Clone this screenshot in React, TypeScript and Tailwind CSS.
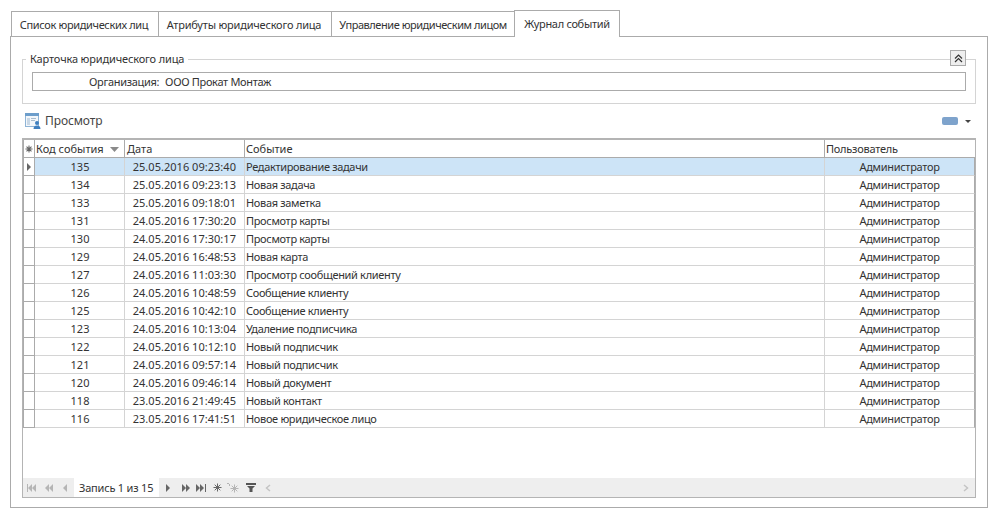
import React from 'react';

const rows = [
  ['135', '25.05.2016 09:23:40', 'Редактирование задачи'],
  ['134', '25.05.2016 09:23:13', 'Новая задача'],
  ['133', '25.05.2016 09:18:01', 'Новая заметка'],
  ['131', '24.05.2016 17:30:20', 'Просмотр карты'],
  ['130', '24.05.2016 17:30:17', 'Просмотр карты'],
  ['129', '24.05.2016 16:48:53', 'Новая карта'],
  ['127', '24.05.2016 11:03:30', 'Просмотр сообщений клиенту'],
  ['126', '24.05.2016 10:48:59', 'Сообщение клиенту'],
  ['125', '24.05.2016 10:42:10', 'Сообщение клиенту'],
  ['123', '24.05.2016 10:13:04', 'Удаление подписчика'],
  ['122', '24.05.2016 10:12:10', 'Новый подписчик'],
  ['121', '24.05.2016 09:57:14', 'Новый подписчик'],
  ['120', '24.05.2016 09:46:14', 'Новый документ'],
  ['118', '23.05.2016 21:49:45', 'Новый контакт'],
  ['116', '23.05.2016 17:41:51', 'Новое юридическое лицо'],
];

const tabs = [
  { label: 'Список юридических лиц', cls: 'w-[148px] tracking-[-0.35px] pr-[2px]' },
  { label: 'Атрибуты юридического лица', cls: 'w-[174px] tracking-[-0.2px] pr-[2px]' },
  { label: 'Управление юридическим лицом', cls: 'w-[184px] tracking-[-0.45px]' },
];

const Tri = ({ dir, color }: { dir: 'l' | 'r'; color: string }) => (
  <path d={dir === 'r' ? 'M0 0L4 4L0 8Z' : 'M4 0L0 4L4 8Z'} fill={color} />
);

const NavIcon = ({ kind, color }: { kind: string; color: string }) => (
  <svg width="10" height="8" viewBox="0 0 10 8" className="shrink-0">
    {kind === 'first' && (
      <>
        <rect x="0" y="0" width="1" height="8" fill={color} />
        <g transform="translate(1 0)"><Tri dir="l" color={color} /></g>
        <g transform="translate(5 0)"><Tri dir="l" color={color} /></g>
      </>
    )}
    {kind === 'prevPage' && (
      <>
        <g transform="translate(1 0)"><Tri dir="l" color={color} /></g>
        <g transform="translate(5 0)"><Tri dir="l" color={color} /></g>
      </>
    )}
    {kind === 'prev' && <g transform="translate(3 0)"><Tri dir="l" color={color} /></g>}
    {kind === 'next' && <g transform="translate(2 0)"><Tri dir="r" color={color} /></g>}
    {kind === 'nextPage' && (
      <>
        <g transform="translate(1 0)"><Tri dir="r" color={color} /></g>
        <g transform="translate(5 0)"><Tri dir="r" color={color} /></g>
      </>
    )}
    {kind === 'last' && (
      <>
        <g transform="translate(0 0)"><Tri dir="r" color={color} /></g>
        <g transform="translate(4 0)"><Tri dir="r" color={color} /></g>
        <rect x="9" y="0" width="1" height="8" fill={color} />
      </>
    )}
  </svg>
);

const Star = ({ color, size = 9, width = 1 }: { color: string; size?: number; width?: number }) => (
  <svg width={size} height={size} viewBox="0 0 9 9" className="shrink-0">
    <path d="M4.5 0.5V8.5M0.5 4.5H8.5M1.7 1.7L7.3 7.3M7.3 1.7L1.7 7.3" stroke={color} strokeWidth={width} fill="none" />
  </svg>
);

const App = () => {
  return (
    <div className="w-[998px] h-[519px] bg-white overflow-hidden pt-[10px] pl-[10px] text-[#333333] text-[11px] leading-none font-['Noto_Sans',sans-serif]">
      {/* tabs */}
      <div className="flex items-end h-[27px] pl-px relative z-10">
        {tabs.map((t) => (
          <div
            key={t.label}
            className={`${t.cls} h-[25px] mb-px border border-b-0 border-[#ababab] bg-white flex items-center justify-center -mr-px pt-px`}
          >
            {t.label}
          </div>
        ))}
        <div className="w-[106px] h-[27px] border border-b-0 border-[#ababab] bg-white flex items-center justify-center pb-px tracking-[-0.3px]">
          Журнал событий
        </div>
      </div>

      {/* page */}
      <div className="w-[978px] h-[472px] -mt-px border border-[#ababab] pt-[22px] px-[11px]">
        <div className="relative w-[954px] h-[45px] border border-[#d4d4d4] pt-[12px] pl-[9px]">
          <div className="absolute left-[3px] -top-[9px] h-[14px] px-[4px] bg-white flex items-center tracking-[-0.15px]">Карточка юридического лица</div>
          <button className="absolute -top-[10px] right-[9px] w-[16px] h-[16px] border border-[#ababab] bg-[#eeeeee] flex items-center justify-center">
            <svg width="9" height="9" viewBox="0 0 9 9">
              <path d="M1 4.5L4.5 1L8 4.5M1 8L4.5 4.5L8 8" stroke="#333" strokeWidth="1.2" fill="none" />
            </svg>
          </button>
          <div className="w-[934px] h-[19px] border border-[#ababab] flex items-center pl-[56px] tracking-[-0.32px]">
            <span>Организация:</span>
            <span className="ml-[6px]">ООО Прокат Монтаж</span>
          </div>
        </div>

        {/* toolbar */}
        <div className="flex items-center h-[18px] mt-[8px] w-[954px]">
          <svg width="16" height="16" viewBox="0 0 16 16" className="ml-[3px] shrink-0">
            <rect x="0.5" y="0.5" width="13" height="13" fill="#f3f7fb" stroke="#8fb4d6" />
            <rect x="0" y="0" width="14" height="3" fill="#6d9ecb" />
            <rect x="2" y="5" width="3" height="7" fill="#c9d8e6" />
            <rect x="6" y="5" width="5" height="1" fill="#a9bccd" />
            <rect x="6" y="7" width="4" height="1" fill="#a9bccd" />
            <circle cx="12" cy="10" r="2" fill="#3f7fbf" />
            <path d="M8.5 16C8.5 13.5 10 12.5 12 12.5C14 12.5 15.5 13.5 15.5 16Z" fill="#3f7fbf" />
          </svg>
          <span className="ml-[4px] text-[12px] tracking-[-0.1px] text-[#444]">Просмотр</span>
          <div className="ml-auto mr-[5px] flex items-center">
            <div className="w-[16px] h-[8px] rounded-[2px] bg-[#7ea3cc]" />
            <svg width="6" height="3" viewBox="0 0 6 3" className="ml-[7px]">
              <path d="M0 0H6L3 3Z" fill="#444" />
            </svg>
          </div>
        </div>

        {/* grid */}
        <div className="w-[954px] h-[360px] mt-[8px] border border-t-2 border-[#b4b4b4] flex flex-col">
          <div className="flex h-[18px] shrink-0 border-b border-[#ababab]">
            <div className="w-[12px] border-l border-r border-[#ababab] flex items-center justify-center"><Star color="#666" size={8} width={1.2} /></div>
            <div className="w-[90px] border-r border-[#ababab] flex items-center pl-[1px]">
              Код события
              <svg width="9" height="5" viewBox="0 0 9 5" className="ml-[6px] mt-px"><path d="M0 0H9L4.5 5Z" fill="#8a8a8a" /></svg>
            </div>
            <div className="w-[120px] border-r border-[#ababab] flex items-center pl-[2px]">Дата</div>
            <div className="w-[580px] border-r border-[#ababab] flex items-center pl-[1px]">Событие</div>
            <div className="flex-1 flex items-center pl-[1px] tracking-[-0.25px]">Пользователь</div>
          </div>
          {rows.map((r, i) => (
            <div key={r[0]} className={`flex h-[18px] shrink-0 border-b border-[#d4d4d4] ${i === 0 ? 'bg-[#cde4f7]' : ''} border-r-[#ababab] border-r`}>
              <div className="w-[12px] bg-white border-l border-r border-[#ababab] flex items-center justify-center border-b -mb-px border-b-[#ababab]">
                {i === 0 && <svg width="4" height="8" viewBox="0 0 4 8"><path d="M0 0L4 4L0 8Z" fill="#666" /></svg>}
              </div>
              <div className="w-[90px] border-r border-[#d4d4d4] flex items-center justify-center pl-[1px]">{r[0]}</div>
              <div className="w-[120px] border-r border-[#d4d4d4] flex items-center justify-end pr-[8px] tracking-[0.03px]">{r[1]}</div>
              <div className="w-[580px] border-r border-[#d4d4d4] flex items-center pl-[1px] tracking-[-0.33px]">{r[2]}</div>
              <div className="flex-1 flex items-center justify-center tracking-[-0.3px]">Администратор</div>
            </div>
          ))}

          {/* navigator */}
          <div className="mt-auto h-[19px] bg-[#eeeeee] flex items-center shrink-0">
            <div className="flex items-center gap-[6.5px] pl-[4px] w-[51px]">
              <NavIcon kind="first" color="#b5b5b5" />
              <NavIcon kind="prevPage" color="#b5b5b5" />
              <NavIcon kind="prev" color="#b5b5b5" />
            </div>
            <div className="w-[85px] h-full bg-white flex items-center pl-[5px] text-[#333] tracking-[-0.2px]">Запись 1 из 15</div>
            <div className="flex items-center gap-[7px] pl-[5px]">
              <NavIcon kind="next" color="#666" />
              <NavIcon kind="nextPage" color="#666" />
              <div className="-ml-[2px]"><NavIcon kind="last" color="#666" /></div>
              <Star color="#666" />
              <svg width="12" height="10" viewBox="0 0 12 10" className="shrink-0 -ml-[2px]">
                <path d="M7.5 1.5V9.5M3.5 5.5H11.5M4.7 2.7L10.3 8.3M10.3 2.7L4.7 8.3" stroke="#b5b5b5" strokeWidth="1" fill="none" />
                <path d="M0 0H2V1H0ZM2 1H3V3H2Z" fill="#b5b5b5" />
              </svg>
              <svg width="10" height="9" viewBox="0 0 10 9" className="shrink-0">
                <path d="M0 0H10V2H0Z" fill="#555" />
                <path d="M1 3H9L6.5 5.5V9H3.5V5.5Z" fill="#555" />
              </svg>
            </div>
            <div className="ml-[6px] flex-1 h-full flex items-center justify-between px-[3px] pr-[6px]">
              <svg width="6" height="8" viewBox="0 0 6 8"><path d="M5 1L1.5 4L5 7" stroke="#c4c4c4" strokeWidth="1.5" fill="none" /></svg>
              <svg width="6" height="8" viewBox="0 0 6 8"><path d="M1 1L4.5 4L1 7" stroke="#c4c4c4" strokeWidth="1.5" fill="none" /></svg>
            </div>
          </div>
        </div>
      </div>
    </div>
  );
};

export default App;
